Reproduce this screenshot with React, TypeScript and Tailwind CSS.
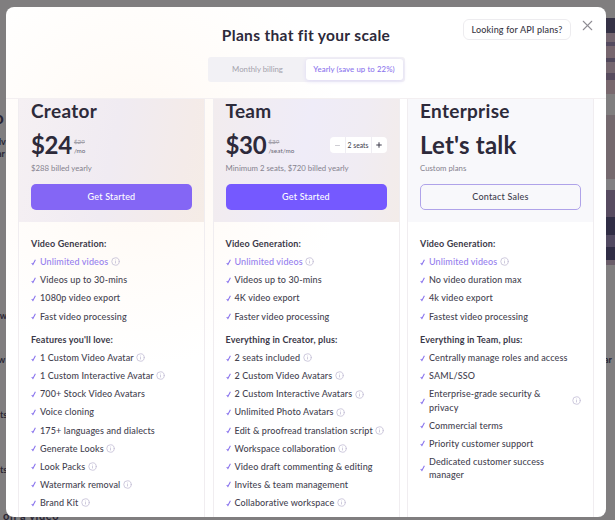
import { Info, Minus, Plus, X } from "lucide-react";

type Feature = { label: string; info?: boolean; highlight?: boolean };

type Plan = {
  name: string;
  price: string;
  was?: string;
  unit?: string;
  note: string;
  cta: string;
  variant: "creator" | "team" | "enterprise";
  video: Feature[];
  title: string;
  features: Feature[];
};

const plans: Plan[] = [
  {
    name: "Creator",
    price: "$24",
    was: "$29",
    unit: "/mo",
    note: "$288 billed yearly",
    cta: "Get Started",
    variant: "creator",
    video: [
      { label: "Unlimited videos", info: true, highlight: true },
      { label: "Videos up to 30-mins" },
      { label: "1080p video export" },
      { label: "Fast video processing" },
    ],
    title: "Features you'll love:",
    features: [
      { label: "1 Custom Video Avatar", info: true },
      { label: "1 Custom Interactive Avatar", info: true },
      { label: "700+ Stock Video Avatars" },
      { label: "Voice cloning" },
      { label: "175+ languages and dialects" },
      { label: "Generate Looks", info: true },
      { label: "Look Packs", info: true },
      { label: "Watermark removal", info: true },
      { label: "Brand Kit", info: true },
    ],
  },
  {
    name: "Team",
    price: "$30",
    was: "$39",
    unit: "/seat/mo",
    note: "Minimum 2 seats, $720 billed yearly",
    cta: "Get Started",
    variant: "team",
    video: [
      { label: "Unlimited videos", info: true, highlight: true },
      { label: "Videos up to 30-mins" },
      { label: "4K video export" },
      { label: "Faster video processing" },
    ],
    title: "Everything in Creator, plus:",
    features: [
      { label: "2 seats included", info: true },
      { label: "2 Custom Video Avatars", info: true },
      { label: "2 Custom Interactive Avatars", info: true },
      { label: "Unlimited Photo Avatars", info: true },
      { label: "Edit & proofread translation script", info: true },
      { label: "Workspace collaboration", info: true },
      { label: "Video draft commenting & editing" },
      { label: "Invites & team management" },
      { label: "Collaborative workspace", info: true },
    ],
  },
  {
    name: "Enterprise",
    price: "Let's talk",
    note: "Custom plans",
    cta: "Contact Sales",
    variant: "enterprise",
    video: [
      { label: "Unlimited videos", info: true, highlight: true },
      { label: "No video duration max" },
      { label: "4k video export" },
      { label: "Fastest video processing" },
    ],
    title: "Everything in Team, plus:",
    features: [
      { label: "Centrally manage roles and access" },
      { label: "SAML/SSO" },
      { label: "Enterprise-grade security & privacy", info: true },
      { label: "Commercial terms" },
      { label: "Priority customer support" },
      { label: "Dedicated customer success manager" },
    ],
  },
];

const headerBg = {
  creator: "bg-[linear-gradient(100deg,#f5f0f3_0%,#f0ebf2_50%,#f4ebe9_85%,#f5ece6_100%)]",
  team: "bg-[linear-gradient(100deg,#f2ecee_0%,#efecf8_48%,#f0ecf3_75%,#f3ece9_100%)]",
  enterprise: "bg-[#f8f8fb]",
};

const buttonStyle = {
  creator: "bg-[#8466f5] text-white",
  team: "bg-[#7559ff] text-white",
  enterprise: "border border-[#afa3e9] text-[#3f3d4d]",
};

const CheckMark = () => (
  <svg viewBox="0 0 6 8" className="mr-[3px] h-2 w-[6px] shrink-0" fill="none" stroke="#8b76ee" strokeWidth="1.1">
    <path d="M0.7 5 L1.9 6.5 L4.4 1.7" />
  </svg>
);

const FeatureRow = ({ label, info, highlight }: Feature) => (
  <li className="flex items-center">
    <CheckMark />
    <span className={`max-w-[145px] leading-[13.3px] ${highlight ? "text-[#9680ee]" : "text-[#454351]"}`}>{label}</span>
    {info && <Info className="ml-[2.5px] h-[9px] w-[9px] shrink-0 text-[#c3bfd6]" strokeWidth={2.2} />}
  </li>
);

const FeatureList = ({ items }: { items: Feature[] }) => (
  <ul className="flex flex-col gap-[4.8px] text-[9px] font-medium tracking-[0.12px]">
    {items.map((item) => (
      <FeatureRow key={item.label} {...item} />
    ))}
  </ul>
);

const SeatPicker = () => (
  <div className="ml-auto flex h-4 w-[57px] items-center rounded-[4px] bg-white text-[#3d3b4b]">
    <span className="flex w-[15px] justify-center">
      <Minus className="h-[7px] w-[7px] text-[#aaa8b4]" />
    </span>
    <span className="flex h-full flex-1 items-center justify-center border-x border-[#efedf3] text-[6.8px]">2 seats</span>
    <span className="flex w-[15px] justify-center">
      <Plus className="h-[8px] w-[8px]" strokeWidth={3} />
    </span>
  </div>
);

const PlanCard = ({ plan }: { plan: Plan }) => (
  <section className="w-[187px] border-x border-[#f0edf0]">
    <div className={`h-[123px] px-3 ${headerBg[plan.variant]}`}>
      <h2 className="text-[19px] leading-[23px] font-bold tracking-[0.3px] text-[#2d2a3a]">{plan.name}</h2>
      <div className="mt-2 flex h-[30px] items-center">
        <span
          className={`text-[24px] leading-[30px] font-bold text-[#2d2a3a] ${plan.unit ? "tracking-[-0.3px]" : "tracking-[0.2px]"}`}
        >
          {plan.price}
        </span>
        {plan.unit && (
          <div className="ml-[2px] pt-[2px] text-[6.3px] leading-[9.5px] font-medium text-[#706e7b]">
            <p className="text-[#a19fa9] line-through">{plan.was}</p>
            <p className="tracking-[0.05px]">{plan.unit}</p>
          </div>
        )}
        {plan.variant === "team" && <SeatPicker />}
      </div>
      <p className="mt-[2px] text-[7.8px] leading-[13px] text-[#85828e]">{plan.note}</p>
      <button
        className={`mt-[9px] block h-[26px] w-[161px] rounded-[5px] text-[9px] font-medium tracking-[0.2px] ${buttonStyle[plan.variant]}`}
      >
        {plan.cta}
      </button>
    </div>
    <div className="h-[297px] px-3 pt-[15px]">
      <h3 className="mb-[5px] text-[9px] leading-[13.3px] font-bold tracking-[0.15px] text-[#3b3949]">Video Generation:</h3>
      <FeatureList items={plan.video} />
      <h3 className="mt-[10px] mb-[5px] text-[9px] leading-[13.3px] font-bold tracking-[0.15px] text-[#3b3949]">
        {plan.title}
      </h3>
      <FeatureList items={plan.features} />
    </div>
  </section>
);

// Slivers of the page that show round the dialog
const Backdrop = () => (
  <div className="absolute inset-0 overflow-hidden text-[9px] font-bold text-[#292635]">
    <span className="absolute top-[108px] left-[-6px] text-[17px] leading-5">o</span>
    <span className="absolute top-[135px] left-[-4px]">dv</span>
    <span className="absolute top-[147px] left-[-3px]">ar</span>
    <span className="absolute top-[309px] left-[-5px]">ew</span>
    <span className="absolute top-[353px] left-[-2px]">w</span>
    <span className="absolute top-[408px] left-0">ts</span>
    <span className="absolute top-[463px] left-0">ts</span>
    <span className="absolute top-[509px] left-[3px] text-[11px] leading-[14px] tracking-[0.6px]">on a video</span>
    <div className="absolute top-[18px] right-0 h-[76px] w-[14px] bg-[linear-gradient(#353145_0_15px,#74656f_15px_24px,#554b60_24px_28px,#77666e_28px_40px,#51485c_40px_44px,#75666f_44px_55px,#574b5e_55px_62px,#79686e_62px)]" />
    <div className="absolute top-[115px] right-0 h-[150px] w-[14px] bg-[linear-gradient(#74696e_0_64px,#817f82_64px_75px,#574b60_75px_102px,#302d45_102px_120px,#514961_120px_132px,#302d45_132px_145px,#6a5d69_145px)]" />
    <span className="absolute top-[353px] left-[604px]">ar</span>
  </div>
);

const App = () => {
  return (
    <div className="relative h-[520px] w-[615px] overflow-hidden bg-[#807e7f] pt-[7px] pl-[6px] font-['Lato','Open_Sans',sans-serif]">
      <Backdrop />
      <main className="relative h-[510px] w-[600px] overflow-hidden rounded-[8px] bg-white bg-[radial-gradient(circle_at_130px_150px,#fff8f2_0,#fffcf9_110px,#ffffff_210px)]">
        <header className="relative flex h-[92px] flex-col items-center border-b border-[#f3eff1] pt-[18px]">
          <h1 className="text-[15.5px] leading-5 font-bold tracking-[0.33px] text-[#2d2a3a]">Plans that fit your scale</h1>
          <div className="mt-3 flex h-[25px] w-[197px] rounded-[3px] bg-[#f2f1f5] p-[2px] text-[7.8px]">
            <button className="flex-1 text-[#a4a2ac]">Monthly billing</button>
            <button className="w-[97px] rounded-[3px] bg-white font-medium tracking-[0.1px] text-[#8b74ed] shadow-[0_1px_4px_#ded9f5]">
              Yearly (save up to 22%)
            </button>
          </div>
          <div className="absolute top-[12px] right-[10px] flex items-start gap-[8px]">
            <button className="h-[21px] w-[108px] rounded-[6px] border border-[#edecef] text-[9px] font-medium tracking-[0.15px] text-[#383645]">
              Looking for API plans?
            </button>
            <X className="-mt-[2px] h-[17px] w-[17px] text-[#8f8d94]" strokeWidth={1.5} />
          </div>
        </header>
        <div className="flex gap-[7.5px] pl-[12px]">
          {plans.map((plan) => (
            <PlanCard key={plan.name} plan={plan} />
          ))}
        </div>
      </main>
    </div>
  );
};

export default App;
